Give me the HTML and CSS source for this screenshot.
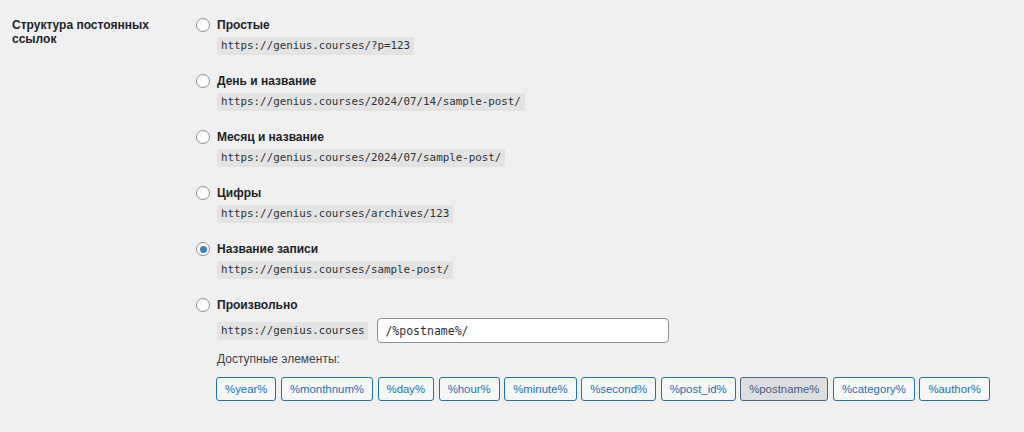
FILE: index.html
```html
<!DOCTYPE html>
<html lang="ru">
<head>
<meta charset="utf-8">
<title>Постоянные ссылки</title>
<link rel="stylesheet" href="styles.css">
</head>
<body>
<div class="form-row">
  <div class="th">Структура постоянных ссылок</div>
  <div class="td">
    <div class="opt">
      <label class="opt-label"><input type="radio" name="p" class="radio"> Простые</label>
      <code class="code">https://genius.courses/?p=123</code>
    </div>
    <div class="opt">
      <label class="opt-label"><input type="radio" name="p" class="radio"> День и название</label>
      <code class="code">https://genius.courses/2024/07/14/sample-post/</code>
    </div>
    <div class="opt">
      <label class="opt-label"><input type="radio" name="p" class="radio"> Месяц и название</label>
      <code class="code">https://genius.courses/2024/07/sample-post/</code>
    </div>
    <div class="opt">
      <label class="opt-label"><input type="radio" name="p" class="radio"> Цифры</label>
      <code class="code">https://genius.courses/archives/123</code>
    </div>
    <div class="opt">
      <label class="opt-label"><input type="radio" name="p" class="radio" checked> Название записи</label>
      <code class="code">https://genius.courses/sample-post/</code>
    </div>
    <div class="opt custom">
      <label class="opt-label"><input type="radio" name="p" class="radio"> Произвольно</label>
      <div class="custom-row">
        <code class="code">https://genius.courses</code>
        <input type="text" class="text-input" value="/%postname%/">
      </div>
      <div class="avail">Доступные элементы:</div>
      <div class="tags">
        <button class="tag">%year%</button>
        <button class="tag">%monthnum%</button>
        <button class="tag">%day%</button>
        <button class="tag">%hour%</button>
        <button class="tag">%minute%</button>
        <button class="tag">%second%</button>
        <button class="tag">%post_id%</button>
        <button class="tag active">%postname%</button>
        <button class="tag">%category%</button>
        <button class="tag">%author%</button>
      </div>
    </div>
  </div>
</div>
</body>
</html>
```
FILE: styles.css
```css
html, body {
  margin: 0;
  padding: 0;
  background: #f0f0f1;
  color: #1d2327;
  font-family: "Liberation Sans", Arial, sans-serif;
}
body {
  width: 1024px;
  height: 432px;
  overflow: hidden;
}
.form-row {
  display: flex;
  padding-left: 12px;
}
.th {
  width: 154px;
  padding-right: 30px;
  padding-top: 18px;
  font-weight: bold;
  font-size: 12px;
  line-height: 14px;
  color: #1d2327;
}
.td {
  padding-top: 15px;
  display: flex;
  flex-direction: column;
}
.opt {
  display: flex;
  flex-direction: column;
  align-items: flex-start;
  margin-bottom: 16px;
}
.opt-label {
  display: flex;
  align-items: center;
  height: 20px;
  font-size: 12px;
  font-weight: bold;
  color: #1d2327;
  gap: 7px;
}
.radio {
  appearance: none;
  -webkit-appearance: none;
  margin: 0;
  width: 14px;
  height: 14px;
  border: 1px solid #8c8f94;
  border-radius: 50%;
  background: #fff;
  box-sizing: border-box;
  display: flex;
  align-items: center;
  justify-content: center;
}
.radio:checked::before {
  content: "";
  width: 7px;
  height: 7px;
  border-radius: 50%;
  background: #3582c4;
}
.code {
  margin-top: 2px;
  margin-left: 21px;
  height: 18px;
  line-height: 18px;
  padding: 0 4px;
  background: #e3e3e4;
  color: #2c3338;
  font-family: "DejaVu Sans Mono", "Liberation Mono", monospace;
  font-size: 10.83px;
}
.custom-row {
  display: flex;
  align-items: center;
  margin-top: 3px;
  margin-left: 21px;
  gap: 9px;
}
.custom-row .code {
  margin: 0;
}
.text-input {
  width: 292px;
  height: 25px;
  box-sizing: border-box;
  border: 1px solid #8c8f94;
  border-radius: 4px;
  background: #fff;
  padding: 0 7px;
  margin: 0;
  font-family: "DejaVu Sans Mono", "Liberation Mono", monospace;
  font-size: 11.5px;
  color: #2c3338;
}
.avail {
  margin-top: 8px;
  margin-left: 21px;
  font-size: 12px;
  line-height: 16px;
  color: #3c434a;
}
.tags {
  display: flex;
  gap: 4.5px;
  margin-top: 10px;
  margin-left: 20px;
}
.tag {
  height: 24px;
  padding: 0 8px;
  margin: 0;
  border: 1px solid #2271b1;
  border-radius: 3px;
  background: #f6f7f7;
  color: #2271b1;
  font-family: "Liberation Sans", Arial, sans-serif;
  font-size: 11.4px;
  box-sizing: border-box;
}
.tag.active {
  background: #dcdee2;
  border-color: #4b647f;
  color: #4a5d74;
}
```
